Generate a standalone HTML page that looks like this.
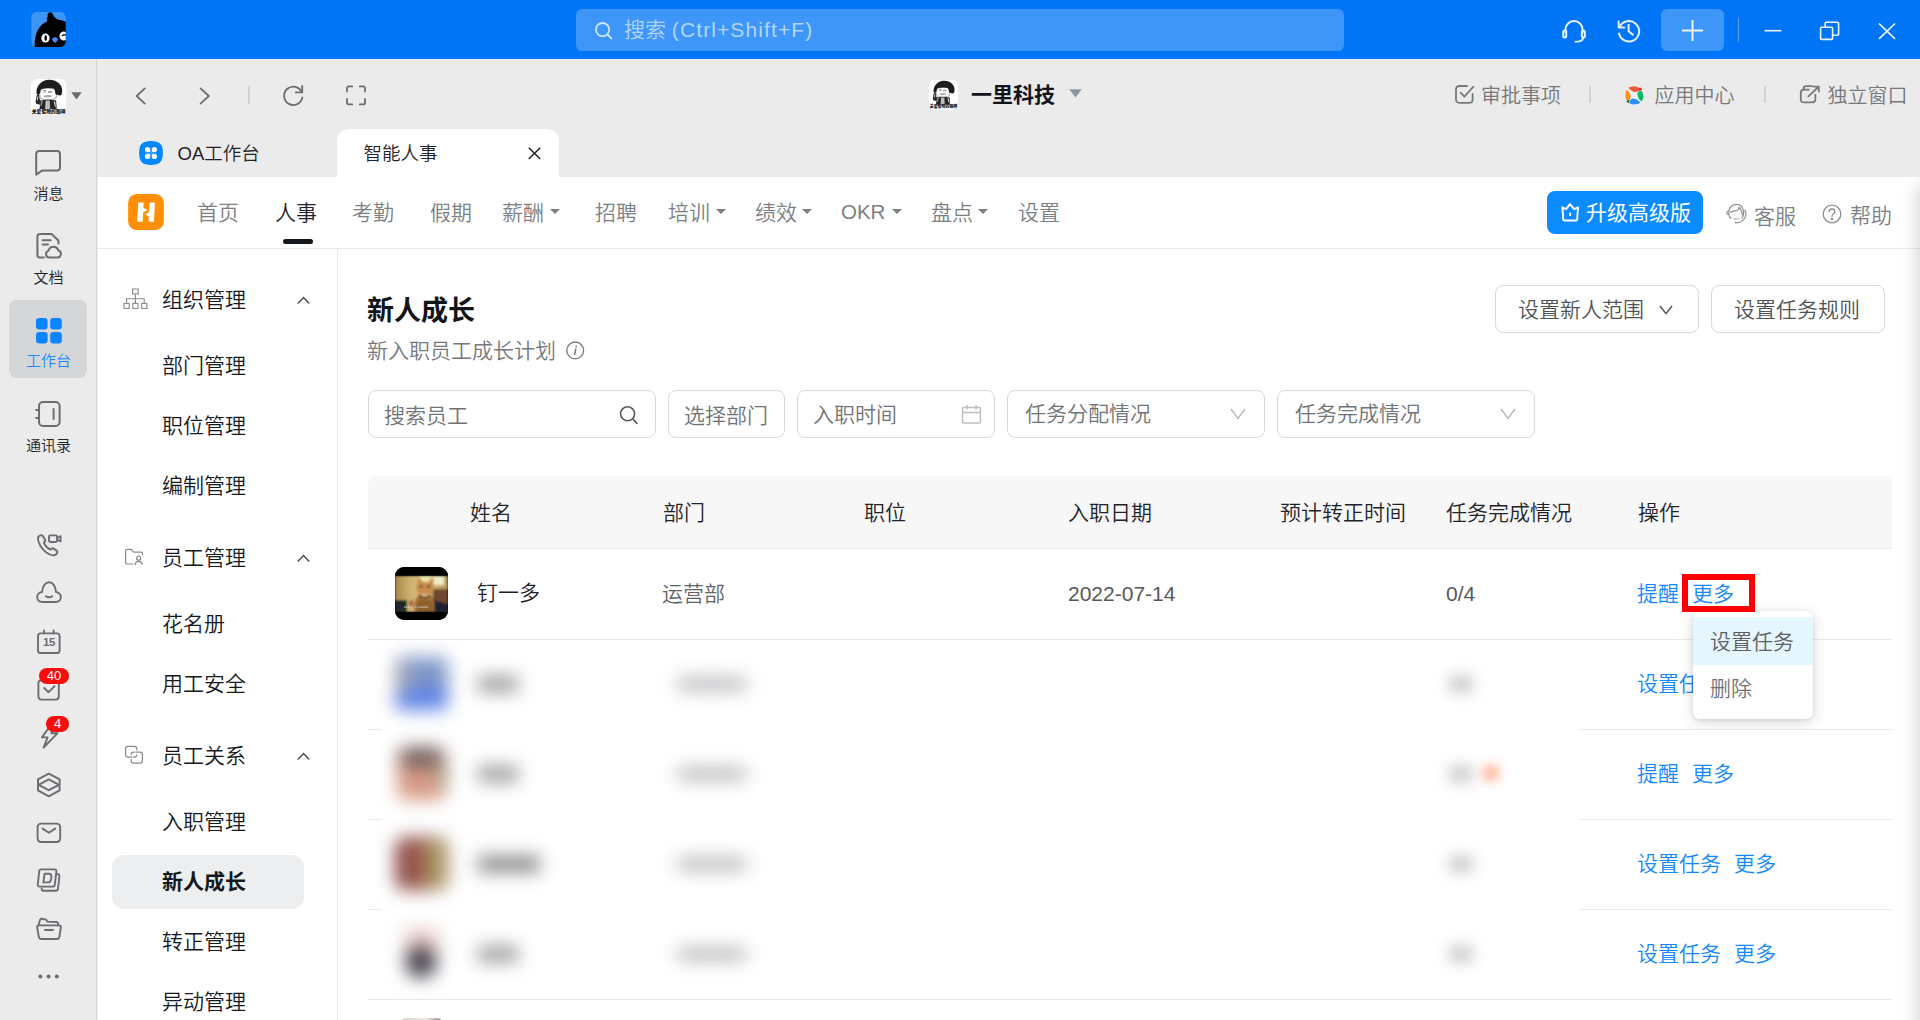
<!DOCTYPE html>
<html lang="zh-CN">
<head>
<meta charset="utf-8">
<title>智能人事 - 新人成长</title>
<style>
*{box-sizing:border-box;margin:0;padding:0}
html,body{width:1920px;height:1020px;overflow:hidden;background:#ebebeb}
body{font-family:"Liberation Sans","Noto Sans CJK SC",sans-serif;color:#1f2329;position:relative;font-weight:350}
.abs{position:absolute}
.t{position:absolute;white-space:nowrap;line-height:1}
svg{position:absolute;overflow:visible}
/* top bar */
#topbar{position:absolute;left:0;top:0;width:1920px;height:59px;background:#0076f6}
#search{position:absolute;left:576px;top:9px;width:768px;height:42px;border-radius:6px;background:#3d96f8}
#plus{position:absolute;left:1661px;top:9px;width:63px;height:42px;border-radius:6px;background:#3d96f8}
/* sidebar */
#side{position:absolute;left:0;top:59px;width:97px;height:961px;background:#ebebeb;border-right:1px solid #d6d7d9}
.slabel{position:absolute;left:0;width:97px;text-align:center;font-size:15px;line-height:1;color:#1f2329}
/* app */
#app{position:absolute;left:98px;top:177px;width:1822px;height:843px;background:#fff}
#appnavline{position:absolute;left:98px;top:248px;width:1822px;height:1px;background:#e9eaec}
.nv{position:absolute;top:202px;font-size:21px;line-height:1;color:#7c7f83;white-space:nowrap}
.car{position:absolute;width:0;height:0;border-left:5.5px solid transparent;border-right:5.5px solid transparent;border-top:5.5px solid #7c7f83;top:209px}
#menuline{position:absolute;left:337px;top:249px;width:1px;height:771px;background:#ebecee}
.mg{position:absolute;left:162px;font-size:21px;line-height:1;color:#14181d;white-space:nowrap}
.up{position:absolute;left:297px}

.fbox{position:absolute;top:390px;height:48px;border:1px solid #d9dadc;border-radius:8px;background:#fff}
.ph{position:absolute;font-size:21px;line-height:1;color:#707377;white-space:nowrap}
.th{position:absolute;top:502px;font-size:21px;line-height:1;color:#1f2329;white-space:nowrap}
.lnk{position:absolute;font-size:21px;line-height:1;color:#1288fb;white-space:nowrap}
.rowline{position:absolute;left:368px;width:1524px;height:1px;background:#e9e9e9}
.blur{position:absolute;filter:blur(7px)}
</style>
</head>
<body>
<!-- TOPBAR -->
<div id="topbar">
  <!-- logo -->
  <svg style="left:31px;top:12px" width="35" height="35" viewBox="180 200 595 605">
    <defs><clipPath id="lg"><rect x="180" y="200" width="595" height="605" rx="95"/></clipPath></defs>
    <rect x="180" y="200" width="595" height="605" rx="95" fill="#3d96f7"/>
    <g clip-path="url(#lg)">
      <path d="M240 805 C225 620 290 430 455 360 L445 300 L465 290 L460 240 L490 205 L540 215 C565 270 590 310 630 330 C690 335 740 350 790 375 L790 810 Z" fill="#020204"/>
      <ellipse cx="425" cy="650" rx="72" ry="77" fill="#fff"/>
      <ellipse cx="430" cy="648" rx="22" ry="52" fill="#020204"/>
      <path d="M540 670 C560 625 620 625 640 665 C630 700 610 725 592 732 C570 722 548 700 540 670Z" fill="#3d8ff5"/>
      <circle cx="745" cy="615" r="78" fill="#fff"/>
      <path d="M700 610 C715 585 750 575 790 590 L790 612 C760 600 730 605 712 622Z" fill="#020204"/>
    </g>
  </svg>
  <div id="search"></div>
  <svg style="left:594px;top:21px" width="20" height="20" viewBox="0 0 20 20" fill="none" stroke="rgba(255,255,255,.75)" stroke-width="1.8"><circle cx="8.6" cy="8.6" r="6.6"/><path d="M13.4 13.4 L18 18"/></svg>
  <div class="t" style="left:624px;top:19px;font-size:21px;color:rgba(255,255,255,.62)">搜索 <span style="letter-spacing:1.1px">(Ctrl+Shift+F)</span></div>
  <!-- headset -->
  <svg style="left:1561px;top:18px" width="26" height="26" viewBox="0 0 26 26" fill="none" stroke="#e6f0ff" stroke-width="2" stroke-linecap="round" stroke-linejoin="round">
    <path d="M4.5 14.5 V11.5 A8.5 8.5 0 0 1 21.5 11.5 V14.5"/>
    <rect x="2.2" y="12.5" width="3" height="7" rx="1.5"/>
    <rect x="20.8" y="12.5" width="3" height="7" rx="1.5"/>
    <path d="M22.3 19.5 C22 22.5 19 23.8 14.5 23.8"/>
  </svg>
  <!-- history -->
  <svg style="left:1616px;top:18px" width="26" height="26" viewBox="0 0 26 26" fill="none" stroke="#e6f0ff" stroke-width="2" stroke-linecap="round" stroke-linejoin="round">
    <path d="M3.6 9.2 A10.2 10.2 0 1 1 3 15.5"/>
    <path d="M2.6 3.6 V9.4 H8.4"/>
    <path d="M12.6 6.8 V13.2 L16.8 16.6"/>
  </svg>
  <div id="plus"></div>
  <svg style="left:1682px;top:20px" width="21" height="21" viewBox="0 0 21 21" stroke="#eef5ff" stroke-width="2"><path d="M10.5 0 V21 M0 10.5 H21"/></svg>
  <div class="abs" style="left:1738px;top:18px;width:1px;height:24px;background:rgba(255,255,255,.32)"></div>
  <!-- min -->
  <svg style="left:1764px;top:20px" width="18" height="21" viewBox="0 0 18 21" stroke="#eef5ff" stroke-width="1.6"><path d="M0.5 10.7 H17.5"/></svg>
  <!-- restore -->
  <svg style="left:1819px;top:20px" width="21" height="21" viewBox="0 0 21 21" fill="none" stroke="#eef5ff" stroke-width="1.6" stroke-linejoin="round">
    <rect x="1.6" y="7.2" width="12" height="12.2" rx="1"/>
    <path d="M6.2 7 V3.2 Q6.2 2.2 7.2 2.2 H18.6 Q19.6 2.2 19.6 3.2 V14.2 Q19.6 15.2 18.6 15.2 H13.8"/>
  </svg>
  <!-- close -->
  <svg style="left:1878px;top:22px" width="18" height="18" viewBox="0 0 18 18" stroke="#eef5ff" stroke-width="1.7"><path d="M1 1.5 L17 16.8 M17 1.5 L1 16.8"/></svg>
</div>
<!-- SIDEBAR -->
<div id="side"></div>
<div id="sideitems">
  <!-- avatar -->
  <svg style="left:30.8px;top:78.5px" width="35.3" height="36" viewBox="130 165 720 735">
    <rect x="130" y="165" width="720" height="735" rx="125" fill="#fff"/>
    <path d="M225 610 L248 490 L292 462 L302 560 L335 640 L300 690 L228 665Z" fill="#2a2a2a"/>
    <path d="M250 590 L262 520 L276 520 L270 600Z" fill="#e8e8e8"/>
    <path d="M318 604 C360 584 600 584 642 604 L655 780 L305 780Z" fill="#262626"/>
    <path d="M428 604 L512 604 L522 780 L418 780Z" fill="#bdbdbd"/>
    <path d="M590 610 L625 640 L640 760 L610 700Z" fill="#d9d9d9"/>
    <path d="M338 610 L375 600 L350 700 L322 720Z" fill="#9a9a9a"/>
    <path d="M338 372 C420 348 520 344 602 364 C645 420 665 500 642 548 C600 595 380 595 328 562 C298 520 304 430 338 372Z" fill="#fff" stroke="#2b2b2b" stroke-width="9"/>
    <path d="M245 470 C222 330 330 185 500 182 C672 180 782 300 766 430 C760 482 745 506 720 500 C682 494 650 482 628 470 C625 420 612 386 602 364 C520 344 420 348 338 372 C320 400 312 440 310 466 C290 472 262 482 245 470Z" fill="#1d1d1d"/>
    <path d="M385 402 Q410 388 436 402 M390 433 Q412 441 434 430 M486 428 Q520 398 556 424 M492 441 Q520 447 550 432" fill="none" stroke="#3a3a3a" stroke-width="11" stroke-linecap="round"/>
    <path d="M392 515 Q470 488 552 512 Q470 562 392 515Z" fill="#d6d6d6" stroke="#3a3a3a" stroke-width="8"/>
    <text x="490" y="868" text-anchor="middle" font-family="'Liberation Sans','Noto Sans CJK SC',sans-serif" font-weight="900" font-size="100" textLength="690" lengthAdjust="spacingAndGlyphs" fill="#111">关爱智障的眼神</text>
  </svg>
  <svg style="left:71px;top:92px" width="11" height="8" viewBox="0 0 11 8"><path d="M0.3 0.3 H10.7 L5.5 7.4Z" fill="#6b6d70"/></svg>
  <!-- message -->
  <svg style="left:34px;top:149px" width="28" height="28" viewBox="0 0 28 28" fill="none" stroke="#6a6d72" stroke-width="2" stroke-linejoin="round"><path d="M5.2 2 H23 Q26 2 26 5 V18.4 Q26 21.4 23 21.4 H8.4 L2.2 25.6 V5 Q2.2 2 5.2 2Z"/></svg>
  <div class="slabel" style="top:186px">消息</div>
  <!-- doc -->
  <svg style="left:35px;top:232px" width="28" height="28" viewBox="0 0 28 28" fill="none" stroke="#6a6d72" stroke-width="2" stroke-linecap="round" stroke-linejoin="round">
    <path d="M9 25.6 H5 Q2.4 25.6 2.4 23 V4.6 Q2.4 2 5 2 H16.6 L23.4 8.4 V11.4"/>
    <path d="M7.6 8.2 H15.6 M7.6 12.6 H13"/>
    <path d="M14.2 25.6 A3.6 3.6 0 0 1 13.6 18.6 A5 5 0 0 1 23.2 18.2 A3.8 3.8 0 0 1 22.6 25.6Z"/>
  </svg>
  <div class="slabel" style="top:270px">文档</div>
  <!-- workbench -->
  <div class="abs" style="left:9px;top:300px;width:78px;height:78px;border-radius:8px;background:#d5d6d8"></div>
  <svg style="left:35.6px;top:317.8px" width="25.8" height="25.6" viewBox="0 0 25.8 25.6" fill="#0a84ff">
    <rect x="0" y="0" width="11.6" height="11.5" rx="3.3"/><rect x="14.2" y="0" width="11.6" height="11.5" rx="3.3"/>
    <rect x="0" y="14.1" width="11.6" height="11.5" rx="3.3"/><rect x="14.2" y="14.1" width="11.6" height="11.5" rx="3.3"/>
  </svg>
  <div class="slabel" style="top:353px;color:#1a8cff">工作台</div>
  <!-- contacts -->
  <svg style="left:34px;top:400px" width="28" height="28" viewBox="0 0 28 28" fill="none" stroke="#6a6d72" stroke-width="2" stroke-linecap="round" stroke-linejoin="round">
    <rect x="5" y="2" width="20.6" height="24" rx="4"/>
    <path d="M2.2 10 H5 M2.2 18 H5"/>
    <path d="M19.6 9 V19"/>
  </svg>
  <div class="slabel" style="top:438px">通讯录</div>
  <!-- phone/video -->
  <svg style="left:35px;top:533px" width="28" height="24" viewBox="0 0 28 24" fill="none" stroke="#6a6d72" stroke-width="1.9" stroke-linecap="round" stroke-linejoin="round">
    <path d="M3 4.4 C4.6 2.2 6.6 1.6 7.8 3 L10 6.6 C10.6 7.8 10 8.8 8.8 9.6 C10 12.8 12.4 15.2 15.6 16.6 C16.4 15.4 17.6 15 18.6 15.6 L21.6 17.6 C23 18.6 22.6 20.2 20.6 21.6 C18.4 23 15.2 22.4 11.4 19.6 C6.6 16 2.4 9.6 3 4.4Z"/>
    <rect x="14" y="2.4" width="8" height="6.6" rx="1.2"/>
    <path d="M22 5 L25.6 3.2 V8.4 L22 6.6"/>
  </svg>
  <!-- cloud face -->
  <svg style="left:35px;top:580px" width="28" height="24" viewBox="0 0 28 24" fill="none" stroke="#6a6d72" stroke-width="1.9" stroke-linecap="round" stroke-linejoin="round">
    <path d="M7.4 22 C0.4 22 0.6 12.6 7 12 C7.4 5.6 11 2.2 14 2.2 C17.4 2.2 20.6 5.6 21 12 C27.4 12.6 27.6 22 20.6 22Z"/>
    <path d="M10.8 16.2 Q14 18.4 17.2 16.2"/>
  </svg>
  <!-- calendar -->
  <svg style="left:36px;top:629px" width="26" height="26" viewBox="0 0 26 26" fill="none" stroke="#6a6d72" stroke-width="1.9" stroke-linecap="round" stroke-linejoin="round">
    <rect x="2" y="4.4" width="21.6" height="19.6" rx="2.6"/>
    <path d="M8 1.4 V4.4 M17.6 1.4 V4.4"/>
  </svg>
  <div class="t" style="left:43px;top:637px;font-size:11.5px;font-weight:700;color:#6a6d72;letter-spacing:-.4px">15</div>
  <!-- todo -->
  <svg style="left:36px;top:678px" width="26" height="24" viewBox="0 0 26 24" fill="none" stroke="#6a6d72" stroke-width="1.9" stroke-linecap="round" stroke-linejoin="round">
    <rect x="2.4" y="2" width="20.4" height="19.6" rx="3"/>
    <path d="M8.2 10 L12.6 14.2 L18.6 8.2"/>
  </svg>
  <div class="abs" style="left:39px;top:668px;width:30px;height:16px;border-radius:8px;background:#fb0d0d;color:#fff;font-size:13px;line-height:16px;text-align:center">40</div>
  <!-- lightning -->
  <svg style="left:39px;top:722px" width="22" height="28" viewBox="0 0 22 28" fill="none" stroke="#6a6d72" stroke-width="1.9" stroke-linejoin="round">
    <path d="M12 2.6 L3 15.4 H8.6 L4.6 25.6 L18.6 11.2 H12.4 L16 2.6Z"/>
  </svg>
  <div class="abs" style="left:46px;top:716px;width:23px;height:16px;border-radius:8px;background:#fb0d0d;color:#fff;font-size:13px;line-height:16px;text-align:center">4</div>
  <!-- layers -->
  <svg style="left:36px;top:772px" width="26" height="26" viewBox="0 0 26 26" fill="none" stroke="#6a6d72" stroke-width="1.9" stroke-linejoin="round">
    <path d="M12.8 1.6 L23.6 7.4 V18.4 L12.8 24.4 L2 18.4 V7.4Z"/>
    <path d="M2.6 12.8 L12.8 7.4 L23 12.8 L12.8 18.2Z"/>
  </svg>
  <!-- mail -->
  <svg style="left:36px;top:822px" width="26" height="22" viewBox="0 0 26 22" fill="none" stroke="#6a6d72" stroke-width="1.9" stroke-linecap="round" stroke-linejoin="round">
    <rect x="1.6" y="1.6" width="22.6" height="18.4" rx="3.4"/>
    <path d="M6.6 6.6 L12.9 10.8 L19.2 6.6"/>
  </svg>
  <!-- D doc -->
  <svg style="left:36px;top:867px" width="26" height="26" viewBox="0 0 26 26" fill="none" stroke="#6a6d72" stroke-width="1.9" stroke-linecap="round" stroke-linejoin="round">
    <path d="M5.4 2.4 H18.4 Q20.6 2.4 20.4 4.6 L18.8 17.6 Q18.6 19.6 16.4 19.6 H3.6 Q1.6 19.6 1.8 17.6 L3.2 4.4 Q3.4 2.4 5.4 2.4Z"/>
    <path d="M8.6 6.8 H13 Q15.8 6.8 15.4 10 L15 12.6 Q14.6 15.4 11.8 15.4 H7.4Z"/>
    <path d="M21.2 7 Q23.6 7 23.4 9.4 L22 21.6 Q21.8 23.8 19.6 23.8 H8 Q5.8 23.8 5.6 21.8"/>
  </svg>
  <!-- folder -->
  <svg style="left:35px;top:917px" width="28" height="24" viewBox="0 0 28 24" fill="none" stroke="#6a6d72" stroke-width="1.9" stroke-linecap="round" stroke-linejoin="round">
    <path d="M3.4 8.4 L5 3 Q5.4 1.6 6.8 1.8 L11 2.6 L12.2 4.6 L21.6 5 Q23 5.2 23.2 6.6 L23.4 8.4"/>
    <path d="M4 8.4 H24 Q26.2 8.4 25.8 10.6 L24.4 19.8 Q24 22 21.8 22 H6.4 Q4.2 22 3.8 19.8 L2.2 10.6 Q1.8 8.4 4 8.4Z"/>
    <path d="M10 13 H18"/>
  </svg>
  <!-- dots -->
  <svg style="left:37px;top:973px" width="24" height="7" viewBox="0 0 24 7" fill="#6a6d72"><circle cx="3.4" cy="3.5" r="2"/><circle cx="11.6" cy="3.5" r="2"/><circle cx="19.8" cy="3.5" r="2"/></svg>
</div>
<!-- NAV ROW -->
<div id="navrow">
  <svg style="left:134px;top:86px" width="14" height="20" viewBox="0 0 14 20" fill="none" stroke="#6a6d72" stroke-width="1.8" stroke-linecap="round" stroke-linejoin="round"><path d="M10.8 2.4 L2.6 10 L10.8 17.6"/></svg>
  <svg style="left:198px;top:86px" width="14" height="20" viewBox="0 0 14 20" fill="none" stroke="#6a6d72" stroke-width="1.8" stroke-linecap="round" stroke-linejoin="round"><path d="M2.6 2.4 L10.8 10 L2.6 17.6"/></svg>
  <div class="abs" style="left:248px;top:86px;width:2px;height:18px;background:#d2d2d2"></div>
  <svg style="left:282px;top:84px" width="23" height="23" viewBox="0 0 23 23" fill="none" stroke="#6a6d72" stroke-width="1.8" stroke-linecap="round" stroke-linejoin="round">
    <path d="M19.8 8.2 A9.2 9.2 0 1 0 20.4 13.4"/>
    <path d="M20.2 2 V8.4 H13.8"/>
  </svg>
  <svg style="left:346px;top:85px" width="20" height="21" viewBox="0 0 20 21" fill="none" stroke="#6a6d72" stroke-width="1.8" stroke-linecap="round" stroke-linejoin="round">
    <path d="M1 6.6 V3.4 Q1 1.4 3 1.4 H6.2 M13.8 1.4 H17 Q19 1.4 19 3.4 V6.6 M19 14 V17.4 Q19 19.4 17 19.4 H13.8 M6.2 19.4 H3 Q1 19.4 1 17.4 V14"/>
  </svg>
  <!-- org -->
  <svg style="left:928.5px;top:80px" width="29" height="29.4" viewBox="130 165 720 735">
    <rect x="130" y="165" width="720" height="735" rx="125" fill="#fff"/>
    <path d="M225 610 L248 490 L292 462 L302 560 L335 640 L300 690 L228 665Z" fill="#2a2a2a"/>
    <path d="M250 590 L262 520 L276 520 L270 600Z" fill="#e8e8e8"/>
    <path d="M318 604 C360 584 600 584 642 604 L655 780 L305 780Z" fill="#262626"/>
    <path d="M428 604 L512 604 L522 780 L418 780Z" fill="#bdbdbd"/>
    <path d="M590 610 L625 640 L640 760 L610 700Z" fill="#d9d9d9"/>
    <path d="M338 610 L375 600 L350 700 L322 720Z" fill="#9a9a9a"/>
    <path d="M338 372 C420 348 520 344 602 364 C645 420 665 500 642 548 C600 595 380 595 328 562 C298 520 304 430 338 372Z" fill="#fff" stroke="#2b2b2b" stroke-width="9"/>
    <path d="M245 470 C222 330 330 185 500 182 C672 180 782 300 766 430 C760 482 745 506 720 500 C682 494 650 482 628 470 C625 420 612 386 602 364 C520 344 420 348 338 372 C320 400 312 440 310 466 C290 472 262 482 245 470Z" fill="#1d1d1d"/>
    <path d="M385 402 Q410 388 436 402 M390 433 Q412 441 434 430 M486 428 Q520 398 556 424 M492 441 Q520 447 550 432" fill="none" stroke="#3a3a3a" stroke-width="11" stroke-linecap="round"/>
    <path d="M392 515 Q470 488 552 512 Q470 562 392 515Z" fill="#d6d6d6" stroke="#3a3a3a" stroke-width="8"/>
    <text x="490" y="868" text-anchor="middle" font-family="'Liberation Sans','Noto Sans CJK SC',sans-serif" font-weight="900" font-size="100" textLength="690" lengthAdjust="spacingAndGlyphs" fill="#111">关爱智障的眼神</text>
  </svg>
  <div class="t" style="left:971px;top:84px;font-size:21px;font-weight:700;color:#111418">一里科技</div>
  <svg style="left:1069px;top:89px" width="13" height="9" viewBox="0 0 13 9"><path d="M0.2 0.2 H12.8 L6.5 8.4Z" fill="#8f959e"/></svg>
  <!-- right links -->
  <svg style="left:1454px;top:84px" width="21" height="21" viewBox="0 0 21 21" fill="none" stroke="#77797d" stroke-width="1.8" stroke-linecap="round" stroke-linejoin="round">
    <path d="M18.6 10 V15.4 Q18.6 18.8 15.2 18.8 H5.4 Q2 18.8 2 15.4 V5.4 Q2 2 5.4 2 H13"/>
    <path d="M6.6 8.6 L10.4 12.6 L19.4 2.6"/>
  </svg>
  <div class="t" style="left:1481px;top:86px;font-size:20px;color:#76787c">审批事项</div>
  <div class="abs" style="left:1589px;top:86px;width:2px;height:17px;background:#d2d2d2"></div>
  <svg style="left:1623.7px;top:84.6px" width="20.4" height="20.4" viewBox="350 245 520 520">
    <circle cx="610" cy="505" r="255" fill="#f4f8fb"/>
    <path d="M455 318 Q520 275 610 275 Q700 275 760 325 L722 400 Q660 440 590 415 Q510 390 455 318Z" fill="#ee5a3c"/>
    <path d="M722 400 L758 305 L818 368Z" fill="#cf1322"/>
    <path d="M690 440 Q730 395 790 385 Q850 450 845 540 Q840 620 800 665 Q745 640 715 570 Q690 500 690 440Z" fill="#0bb866"/>
    <path d="M480 702 Q500 620 560 590 Q640 580 700 630 Q745 670 768 698 Q700 745 610 742 Q530 740 480 702Z" fill="#2f8dfb"/>
    <path d="M385 452 Q395 395 422 360 Q490 420 520 500 Q540 560 500 612 L400 632 Q375 550 385 452Z" fill="#fd922c"/>
    <path d="M403 650 L502 613 L466 712Z" fill="#0b6b38"/>
  </svg>
  <div class="t" style="left:1654.5px;top:86px;font-size:20px;color:#76787c">应用中心</div>
  <div class="abs" style="left:1764px;top:86px;width:2px;height:17px;background:#d2d2d2"></div>
  <svg style="left:1799px;top:85px" width="22" height="19" viewBox="0 0 22 19" fill="none" stroke="#77797d" stroke-width="1.8" stroke-linecap="round" stroke-linejoin="round">
    <path d="M4.6 4.6 V3.6 Q4.6 1.2 7 1.2 H13"/>
    <path d="M16.4 9.6 V14.2 Q16.4 17.4 13.2 17.4 H5 Q1.8 17.4 1.8 14.2 V7.8 Q1.8 4.6 5 4.6 H10"/>
    <path d="M9.4 11.4 L19.4 2 M14.4 1.6 H19.8 V6.6"/>
  </svg>
  <div class="t" style="left:1827.5px;top:86px;font-size:20px;color:#76787c">独立窗口</div>
</div>
<!-- TABS -->
<div id="tabs">
  <svg style="left:139px;top:141px" width="24" height="24" viewBox="0 0 24 24">
    <path d="M12 0.1 C20.6 0.1 23.9 3.4 23.9 12 C23.9 20.6 20.6 23.9 12 23.9 C3.4 23.9 0.1 20.6 0.1 12 C0.1 3.4 3.4 0.1 12 0.1Z" fill="#0089ff"/>
    <g fill="#fff"><path d="M8.4 6 Q11 6 11 8.6 V11 H8.4 Q5.9 11 5.9 8.5 Q5.9 6 8.4 6Z"/><path d="M15.5 6 Q18 6 18 8.5 Q18 11 15.5 11 H12.9 V8.6 Q12.9 6 15.5 6Z"/><path d="M8.4 18 Q5.9 18 5.9 15.5 Q5.9 13 8.4 13 H11 V15.4 Q11 18 8.4 18Z"/><path d="M15.5 18 Q12.9 18 12.9 15.4 V13 H15.5 Q18 13 18 15.5 Q18 18 15.5 18Z"/></g>
    <path d="M11 6.8 H12.9 V17.2 H11Z M6.6 11 H17.4 V13 H6.6Z" fill="#59b0ff" opacity=".55"/>
  </svg>
  <div class="t" style="left:177.5px;top:144.7px;font-size:18.5px;color:#1f2329">OA工作台</div>
  <div class="abs" style="left:337px;top:129px;width:222px;height:49px;background:#fff;border-radius:12px 12px 0 0"></div>
  <div class="t" style="left:363.5px;top:145px;font-size:18.5px;color:#1f2329">智能人事</div>
  <svg style="left:528px;top:147px" width="13" height="13" viewBox="0 0 13 13" stroke="#1f2329" stroke-width="1.5"><path d="M0.8 0.8 L12.2 12 M12.2 0.8 L0.8 12"/></svg>
</div>
<!-- APP -->
<div id="app"></div>
<div id="appnavline"></div>
<div id="menuline"></div>
<div id="appnav">
  <svg style="left:128px;top:194px" width="36" height="36" viewBox="160 155 700 705">
    <rect x="160" y="155" width="700" height="705" rx="172" fill="#ff8f05"/>
    <path d="M355 338 Q355 320 373 320 H447 Q465 320 465 338 L460 430 L545 470 L455 512 L445 682 Q445 700 427 700 H358 Q340 700 340 682Z" fill="#fff"/>
    <path d="M580 338 Q580 320 598 320 H667 Q685 320 685 338 L665 682 Q665 700 647 700 H578 Q560 700 560 682 L565 595 L490 550 L570 510Z" fill="#fff"/>
  </svg>
  <div class="nv" style="left:197px">首页</div>
  <div class="nv" style="left:275px;color:#1f2329">人事</div>
  <div class="abs" style="left:283px;top:239px;width:30px;height:5px;border-radius:2.5px;background:#14181d"></div>
  <div class="nv" style="left:352px">考勤</div>
  <div class="nv" style="left:430px">假期</div>
  <div class="nv" style="left:502px">薪酬</div><div class="car" style="left:550px"></div>
  <div class="nv" style="left:595px">招聘</div>
  <div class="nv" style="left:668px">培训</div><div class="car" style="left:716px"></div>
  <div class="nv" style="left:755px">绩效</div><div class="car" style="left:802px"></div>
  <div class="nv" style="left:841px;font-size:20.5px">OKR</div><div class="car" style="left:892px"></div>
  <div class="nv" style="left:931px">盘点</div><div class="car" style="left:978px"></div>
  <div class="nv" style="left:1018px">设置</div>
  <div class="abs" style="left:1547px;top:191px;width:156px;height:43px;border-radius:8px;background:#0a8bff"></div>
  <svg style="left:1560.6px;top:202.6px" width="18.4" height="18.8" viewBox="270 195 470 480" fill="none" stroke="#fff" stroke-width="50" stroke-linejoin="round">
    <path d="M305 305 L400 352 L500 222 L608 352 L705 305 L683 612 Q680 640 652 640 H358 Q330 640 327 612Z"/>
    <path d="M505 440 V530" stroke-width="46"/>
  </svg>
  <div class="t" style="left:1586px;top:202px;font-size:21px;font-weight:400;color:#fff">升级高级版</div>
  <svg style="left:1725.6px;top:203.4px" width="21.2" height="21.2" viewBox="270 215 540 540" fill="none" stroke="#8a8d91" stroke-width="30" stroke-linecap="round" stroke-linejoin="round">
    <path d="M395 610 C330 560 320 430 370 340 C420 250 560 220 650 290 C740 360 740 520 680 600"/>
    <path d="M380 450 C440 420 520 425 575 395 C590 370 590 345 605 330 C640 360 680 420 690 520"/>
    <path d="M330 420 C300 430 285 450 290 475 C295 500 315 510 340 505"/>
    <path d="M745 400 C790 430 790 540 740 610 C690 690 600 720 505 715"/>
    <path d="M470 605 Q535 650 600 605" stroke="#b9bbbe"/>
  </svg>
  <div class="t" style="left:1754px;top:206px;font-size:21px;color:#7c7f83">客服</div>
  <svg style="left:1822px;top:204px" width="20" height="20" viewBox="0 0 20 20" fill="none" stroke="#8a8d91" stroke-width="1.3" stroke-linecap="round"><circle cx="10" cy="10" r="8.8"/><path d="M7.2 7.8 Q7.2 5 10 5 Q12.8 5 12.8 7.6 Q12.8 9.2 11 10.2 Q10 10.8 10 12.4"/><circle cx="10" cy="15" r=".6" fill="#8a8d91"/></svg>
  <div class="t" style="left:1850px;top:205px;font-size:21px;color:#7c7f83">帮助</div>
</div>
<div id="menu">
  <svg style="left:123px;top:288px" width="25" height="22" viewBox="0 0 25 22" fill="none" stroke="#878a8f" stroke-width="1.1">
    <rect x="9.6" y="1" width="5.6" height="5"/><rect x="1" y="15.4" width="5.2" height="5"/><rect x="9.8" y="15.4" width="5.2" height="5"/><rect x="18.6" y="15.4" width="5.2" height="5"/>
    <path d="M12.4 6 V15.4 M3.6 15.4 V10.8 H21.2 V15.4"/>
  </svg>
  <div class="mg" style="top:289.0px">组织管理</div>
  <svg class="up" style="top:295.7px" width="13" height="9" viewBox="0 0 13 9" fill="none" stroke="#4a4d52" stroke-width="1.5"><path d="M0.8 7.6 L6.5 1.6 L12.2 7.6"/></svg>
  <div class="mg" style="top:355.0px">部门管理</div>
  <div class="mg" style="top:415.0px">职位管理</div>
  <div class="mg" style="top:475.0px">编制管理</div>
  <svg style="left:124px;top:548px" width="20" height="18" viewBox="0 0 20 18" fill="none" stroke="#878a8f" stroke-width="1.2" stroke-linecap="round" stroke-linejoin="round">
    <path d="M9 16 H3 Q1.6 16 1.6 14.6 V2.8 Q1.6 1.4 3 1.4 H7.4 L9.6 4.2 H17 Q18.4 4.2 18.4 5.6 V7"/>
    <circle cx="14.6" cy="10.2" r="2"/>
    <path d="M11.2 16.4 Q11.6 13.4 14.6 13.4 Q17.6 13.4 18.2 16.4"/>
  </svg>
  <div class="mg" style="top:547.0px">员工管理</div>
  <svg class="up" style="top:553.7px" width="13" height="9" viewBox="0 0 13 9" fill="none" stroke="#4a4d52" stroke-width="1.5"><path d="M0.8 7.6 L6.5 1.6 L12.2 7.6"/></svg>
  <div class="mg" style="top:613.0px">花名册</div>
  <div class="mg" style="top:673.0px">用工安全</div>
  <svg style="left:124px;top:745px" width="20" height="20" viewBox="0 0 20 20" fill="none" stroke="#878a8f" stroke-width="1.2" stroke-linecap="round" stroke-linejoin="round">
    <path d="M8 12.2 H4 Q1.6 12.2 1.6 9.8 V3.8 Q1.6 1.4 4 1.4 H10.4 Q12.8 1.4 12.8 3.8 V5"/>
    <path d="M12 7.2 H16 Q18.4 7.2 18.4 9.6 V15.8 Q18.4 18.2 16 18.2 H9.6 Q7.2 18.2 7.2 15.8 V14.4"/>
    <path d="M7.2 9.6 Q7.2 7.2 9.6 7.2 H10.4 M12.8 9.8 Q12.8 12.2 10.4 12.2 H9.6"/>
  </svg>
  <div class="mg" style="top:745.0px">员工关系</div>
  <svg class="up" style="top:751.8px" width="13" height="9" viewBox="0 0 13 9" fill="none" stroke="#4a4d52" stroke-width="1.5"><path d="M0.8 7.6 L6.5 1.6 L12.2 7.6"/></svg>
  <div class="mg" style="top:811.0px">入职管理</div>
  <div class="abs" style="left:112px;top:855px;width:192px;height:54px;border-radius:12px;background:#edeef0"></div>
  <div class="mg" style="top:871.0px;font-weight:700">新人成长</div>
  <div class="mg" style="top:931.0px">转正管理</div>
  <div class="mg" style="top:991.0px">异动管理</div>
</div>
<div id="content">
  <div class="t" style="left:367px;top:297.5px;font-size:27px;font-weight:700;color:#111418">新人成长</div>
  <div class="t" style="left:367px;top:340px;font-size:21px;color:#76787c">新入职员工成长计划</div>
  <svg style="left:566px;top:341px" width="19" height="19" viewBox="0 0 19 19" fill="none" stroke="#77797d" stroke-width="1.3"><circle cx="9.2" cy="9.4" r="8.4"/><path d="M9.8 8 L8.6 13.6" stroke-width="1.5" stroke-linecap="round"/><circle cx="10.3" cy="5.4" r=".9" fill="#77797d" stroke="none"/></svg>
  <!-- top-right buttons -->
  <div class="abs" style="left:1495px;top:285px;width:204px;height:48px;border:1px solid #d9dadc;border-radius:8px;background:#fff"></div>
  <div class="t" style="left:1518px;top:299px;font-size:21px;color:#505357">设置新人范围</div>
  <svg style="left:1659px;top:305px" width="14" height="10" viewBox="0 0 14 10" fill="none" stroke="#505357" stroke-width="1.5"><path d="M1 1 L7 8.6 L13 1"/></svg>
  <div class="abs" style="left:1711px;top:285px;width:174px;height:48px;border:1px solid #d9dadc;border-radius:8px;background:#fff"></div>
  <div class="t" style="left:1734px;top:299px;font-size:21px;color:#505357">设置任务规则</div>
  <!-- filters -->
  <div class="fbox" style="left:368px;width:288px"></div>
  <div class="ph" style="left:384px;top:405px">搜索员工</div>
  <svg style="left:619px;top:405px" width="20" height="20" viewBox="0 0 20 20" fill="none" stroke="#55585c" stroke-width="1.6" stroke-linecap="round"><circle cx="8.6" cy="8.8" r="7"/><path d="M13.8 14 L18 18.4"/></svg>
  <div class="fbox" style="left:668px;width:117px"></div>
  <div class="ph" style="left:684px;top:405px">选择部门</div>
  <div class="fbox" style="left:797px;width:198px"></div>
  <div class="ph" style="left:813px;top:404px">入职时间</div>
  <svg style="left:961px;top:404px" width="21" height="21" viewBox="0 0 21 21" fill="none" stroke="#bdbfc2" stroke-width="1.5"><rect x="1.6" y="3.4" width="17.8" height="15.6" rx="1"/><path d="M1.6 8.4 H19.4 M6 1 V5.4 M15 1 V5.4"/></svg>
  <div class="fbox" style="left:1007px;width:258px"></div>
  <div class="ph" style="left:1025px;top:403px">任务分配情况</div>
  <svg style="left:1230px;top:408px" width="16" height="12" viewBox="0 0 16 12" fill="none" stroke="#b4b6b9" stroke-width="1.4"><path d="M1 1 L8 10.4 L15 1"/></svg>
  <div class="fbox" style="left:1277px;width:258px"></div>
  <div class="ph" style="left:1295px;top:403px">任务完成情况</div>
  <svg style="left:1500px;top:408px" width="16" height="12" viewBox="0 0 16 12" fill="none" stroke="#b4b6b9" stroke-width="1.4"><path d="M1 1 L8 10.4 L15 1"/></svg>
  <!-- table header -->
  <div class="abs" style="left:368px;top:476px;width:1524px;height:72px;background:#f7f7f7;border-radius:7px 7px 0 0"></div>
  <div class="rowline" style="top:548px"></div>
  <div class="th" style="left:470px">姓名</div>
  <div class="th" style="left:663px">部门</div>
  <div class="th" style="left:864px">职位</div>
  <div class="th" style="left:1068px">入职日期</div>
  <div class="th" style="left:1280px">预计转正时间</div>
  <div class="th" style="left:1446px">任务完成情况</div>
  <div class="th" style="left:1638px">操作</div>
  <!-- row lines -->
  <div class="rowline" style="top:639px"></div>
  <div class="rowline" style="top:729px"></div>
  <div class="rowline" style="top:819px"></div>
  <div class="rowline" style="top:909px"></div>
  <div class="rowline" style="top:999px"></div>
  <!-- row 1 -->
  <svg style="left:395px;top:567px" width="53" height="53" viewBox="0 0 53 53">
    <defs>
      <clipPath id="av1"><rect width="53" height="53" rx="9.3"/></clipPath>
      <linearGradient id="bgl" x1="0" x2="1" y1="0" y2="0"><stop offset="0" stop-color="#a88645"/><stop offset=".25" stop-color="#c9ad6c"/><stop offset=".5" stop-color="#d8c183"/><stop offset="1" stop-color="#b89c5c"/></linearGradient>
      <filter id="sb" x="-20%" y="-20%" width="140%" height="140%"><feGaussianBlur stdDeviation=".9"/></filter>
    </defs>
    <g clip-path="url(#av1)">
      <rect width="53" height="53" fill="#000"/>
      <g filter="url(#sb)">
      <rect x="0" y="8.7" width="53" height="36.4" fill="url(#bgl)"/>
      <rect x="24" y="8.7" width="15" height="10" fill="#e8e2a8"/>
      <rect x="39" y="9" width="10" height="9" fill="#ecebc2"/>
      <rect x="38" y="22" width="15" height="23" fill="#6f4a30"/>
      <path d="M38 33 L53 37 V45.1 H36Z" fill="#1d2132"/>
      <rect x="0" y="33" width="12" height="12.1" fill="#1d2a2a"/>
      <path d="M19.5 45.1 C18 36 21 29 25 27 L35 27 C39 30 40 38 39 45.1Z" fill="#a87238"/><path d="M22 45.1 C21 40 22 36 24 33 L36 33 C38 37 38.5 41 38 45.1Z" fill="#8f5e2c"/>
      <path d="M21.5 20 L23.2 9.4 L28 15 L33.5 15 L38 9.6 L38.8 21 C39.5 26 35 29.4 30 29.4 C25 29.4 20.5 26 21.5 20Z" fill="#c98d4b"/>
      <path d="M26.5 26.5 Q30 28.8 33.5 26.5 L33 29.5 Q30 31 27 29.5Z" fill="#e6c79a"/>
      <path d="M24.5 29 Q30 32 35 28.6" stroke="#1a1e24" stroke-width="1.5" fill="none"/>
      <circle cx="26.2" cy="19.6" r="1.3" fill="#2c3a30"/><circle cx="33.6" cy="19.6" r="1.3" fill="#2c3a30"/>
      <path d="M14 35 L17.5 32.5 L18.5 38 L15.5 40Z" fill="#a5503f"/>
      </g>
      <path d="M9 40.2 H17 M20 40.2 H22 M23 40.2 H33.5" stroke="#cfcfcf" stroke-width="1.3" stroke-dasharray="1.6 .5" opacity=".85"/>
      <rect x="0" y="0" width="53" height="8.7" fill="#000"/><rect x="0" y="45.1" width="53" height="8" fill="#000"/>
    </g>
  </svg>
  <div class="t" style="left:477px;top:582px;font-size:21px;color:#1f2329">钉一多</div>
  <div class="t" style="left:662px;top:583px;font-size:21px;color:#606367">运营部</div>
  <div class="t" style="left:1068px;top:583px;font-size:21px;color:#55585c">2022-07-14</div>
  <div class="t" style="left:1446px;top:583px;font-size:21px;color:#55585c">0/4</div>
  <div class="lnk" style="left:1637px;top:583px">提醒</div>
  <div class="lnk" style="left:1692px;top:583px">更多</div>
  <!-- other rows' links -->
  <div class="lnk" style="left:1637px;top:673px">设置任务</div>
  <div class="lnk" style="left:1637px;top:763px">提醒</div>
  <div class="lnk" style="left:1692px;top:763px">更多</div>
  <div class="lnk" style="left:1637px;top:853px">设置任务</div>
  <div class="lnk" style="left:1734px;top:853px">更多</div>
  <div class="lnk" style="left:1637px;top:943px">设置任务</div>
  <div class="lnk" style="left:1734px;top:943px">更多</div>
  <!-- blur cover -->
  <div class="abs" style="left:382px;top:649px;width:1197px;height:348px;background:#fff"></div>
  <svg class="blur" style="left:395px;top:657px;filter:blur(9px)" width="53" height="53" viewBox="0 0 53 53"><rect x="0" y="0" width="53" height="53" rx="8" fill="#8196c6"/><rect x="0" y="30" width="53" height="23" rx="6" fill="#5f83e6"/><rect x="0" y="6" width="14" height="30" fill="#a3a5b6"/><rect x="30" y="6" width="20" height="18" fill="#7b96c8"/></svg>
  <div class="blur" style="left:478px;top:676px;width:40px;height:16px;background:#9a9a9d;filter:blur(9px)"></div>
  <div class="blur" style="left:678px;top:678px;width:68px;height:12px;background:#b0b1b4;filter:blur(9px)"></div>
  <div class="blur" style="left:1450px;top:678px;width:22px;height:12px;background:#b0b1b4;filter:blur(8px)"></div>
  <svg class="blur" style="left:395px;top:747px;filter:blur(9px)" width="53" height="53" viewBox="0 0 53 53"><rect x="2" y="0" width="49" height="53" rx="10" fill="#d79a86"/><rect x="4" y="0" width="45" height="20" rx="10" fill="#6f5e5c"/><rect x="44" y="18" width="9" height="22" fill="#9aa88a"/></svg>
  <div class="blur" style="left:478px;top:766px;width:40px;height:16px;background:#9a9a9d;filter:blur(9px)"></div>
  <div class="blur" style="left:678px;top:768px;width:68px;height:12px;background:#b0b1b4;filter:blur(9px)"></div>
  <div class="blur" style="left:1450px;top:768px;width:22px;height:12px;background:#b0b1b4;filter:blur(8px)"></div>
  <svg class="blur" style="left:395px;top:837px;filter:blur(9px)" width="53" height="53" viewBox="0 0 53 53"><rect x="0" y="0" width="53" height="53" rx="9" fill="#8e4d4c"/><rect x="28" y="2" width="24" height="49" rx="8" fill="#a99a62"/><rect x="14" y="4" width="18" height="45" fill="#9a5b4c"/></svg>
  <div class="blur" style="left:478px;top:856px;width:62px;height:16px;background:#858588;filter:blur(9px)"></div>
  <div class="blur" style="left:678px;top:858px;width:68px;height:12px;background:#b0b1b4;filter:blur(9px)"></div>
  <div class="blur" style="left:1450px;top:858px;width:22px;height:12px;background:#b0b1b4;filter:blur(8px)"></div>
  <svg class="blur" style="left:395px;top:927px;filter:blur(9px)" width="53" height="53" viewBox="0 0 53 53"><rect x="6" y="0" width="41" height="30" rx="12" fill="#eedcd8"/><circle cx="26" cy="35" r="16" fill="#48434f"/><circle cx="26" cy="13" r="6" fill="#d4a79c"/></svg>
  <div class="blur" style="left:478px;top:946px;width:40px;height:16px;background:#9a9a9d;filter:blur(9px)"></div>
  <div class="blur" style="left:678px;top:948px;width:68px;height:12px;background:#b0b1b4;filter:blur(9px)"></div>
  <div class="blur" style="left:1450px;top:948px;width:22px;height:12px;background:#b0b1b4;filter:blur(8px)"></div>
  <div class="blur" style="left:1483px;top:765px;width:16px;height:16px;border-radius:8px;background:#ffa98a;filter:blur(6px)"></div>
  <div class="abs" style="left:399px;top:1018px;width:45px;height:10px;border-radius:8px 8px 0 0;background:linear-gradient(90deg,#d9ccc8 0,#eeeaea 60%,#b0a8a8 85%,#222 100%)"></div>
  <div class="abs" style="left:1693px;top:611px;width:120px;height:108px;border-radius:7px;background:#fff;box-shadow:0 3px 14px rgba(0,0,0,.16),0 1px 4px rgba(0,0,0,.08)"></div>
  <div class="abs" style="left:1693px;top:617px;width:120px;height:48px;background:#e6f6ff"></div>
  <div class="t" style="left:1710px;top:631px;font-size:21px;color:#5c5f63">设置任务</div>
  <div class="t" style="left:1710px;top:678px;font-size:21px;color:#6e7175">删除</div>
  <div class="abs" style="left:1682px;top:574px;width:73px;height:38px;border:6px solid #ff0000"></div>
  <!-- right edge shade -->
  <div class="abs" style="left:1860px;top:177px;width:60px;height:843px;overflow:hidden;pointer-events:none"><div class="abs" style="left:60px;top:8px;width:30px;height:900px;box-shadow:0 0 20px rgba(0,0,0,.22)"></div></div>
</div>
</body>
</html>
